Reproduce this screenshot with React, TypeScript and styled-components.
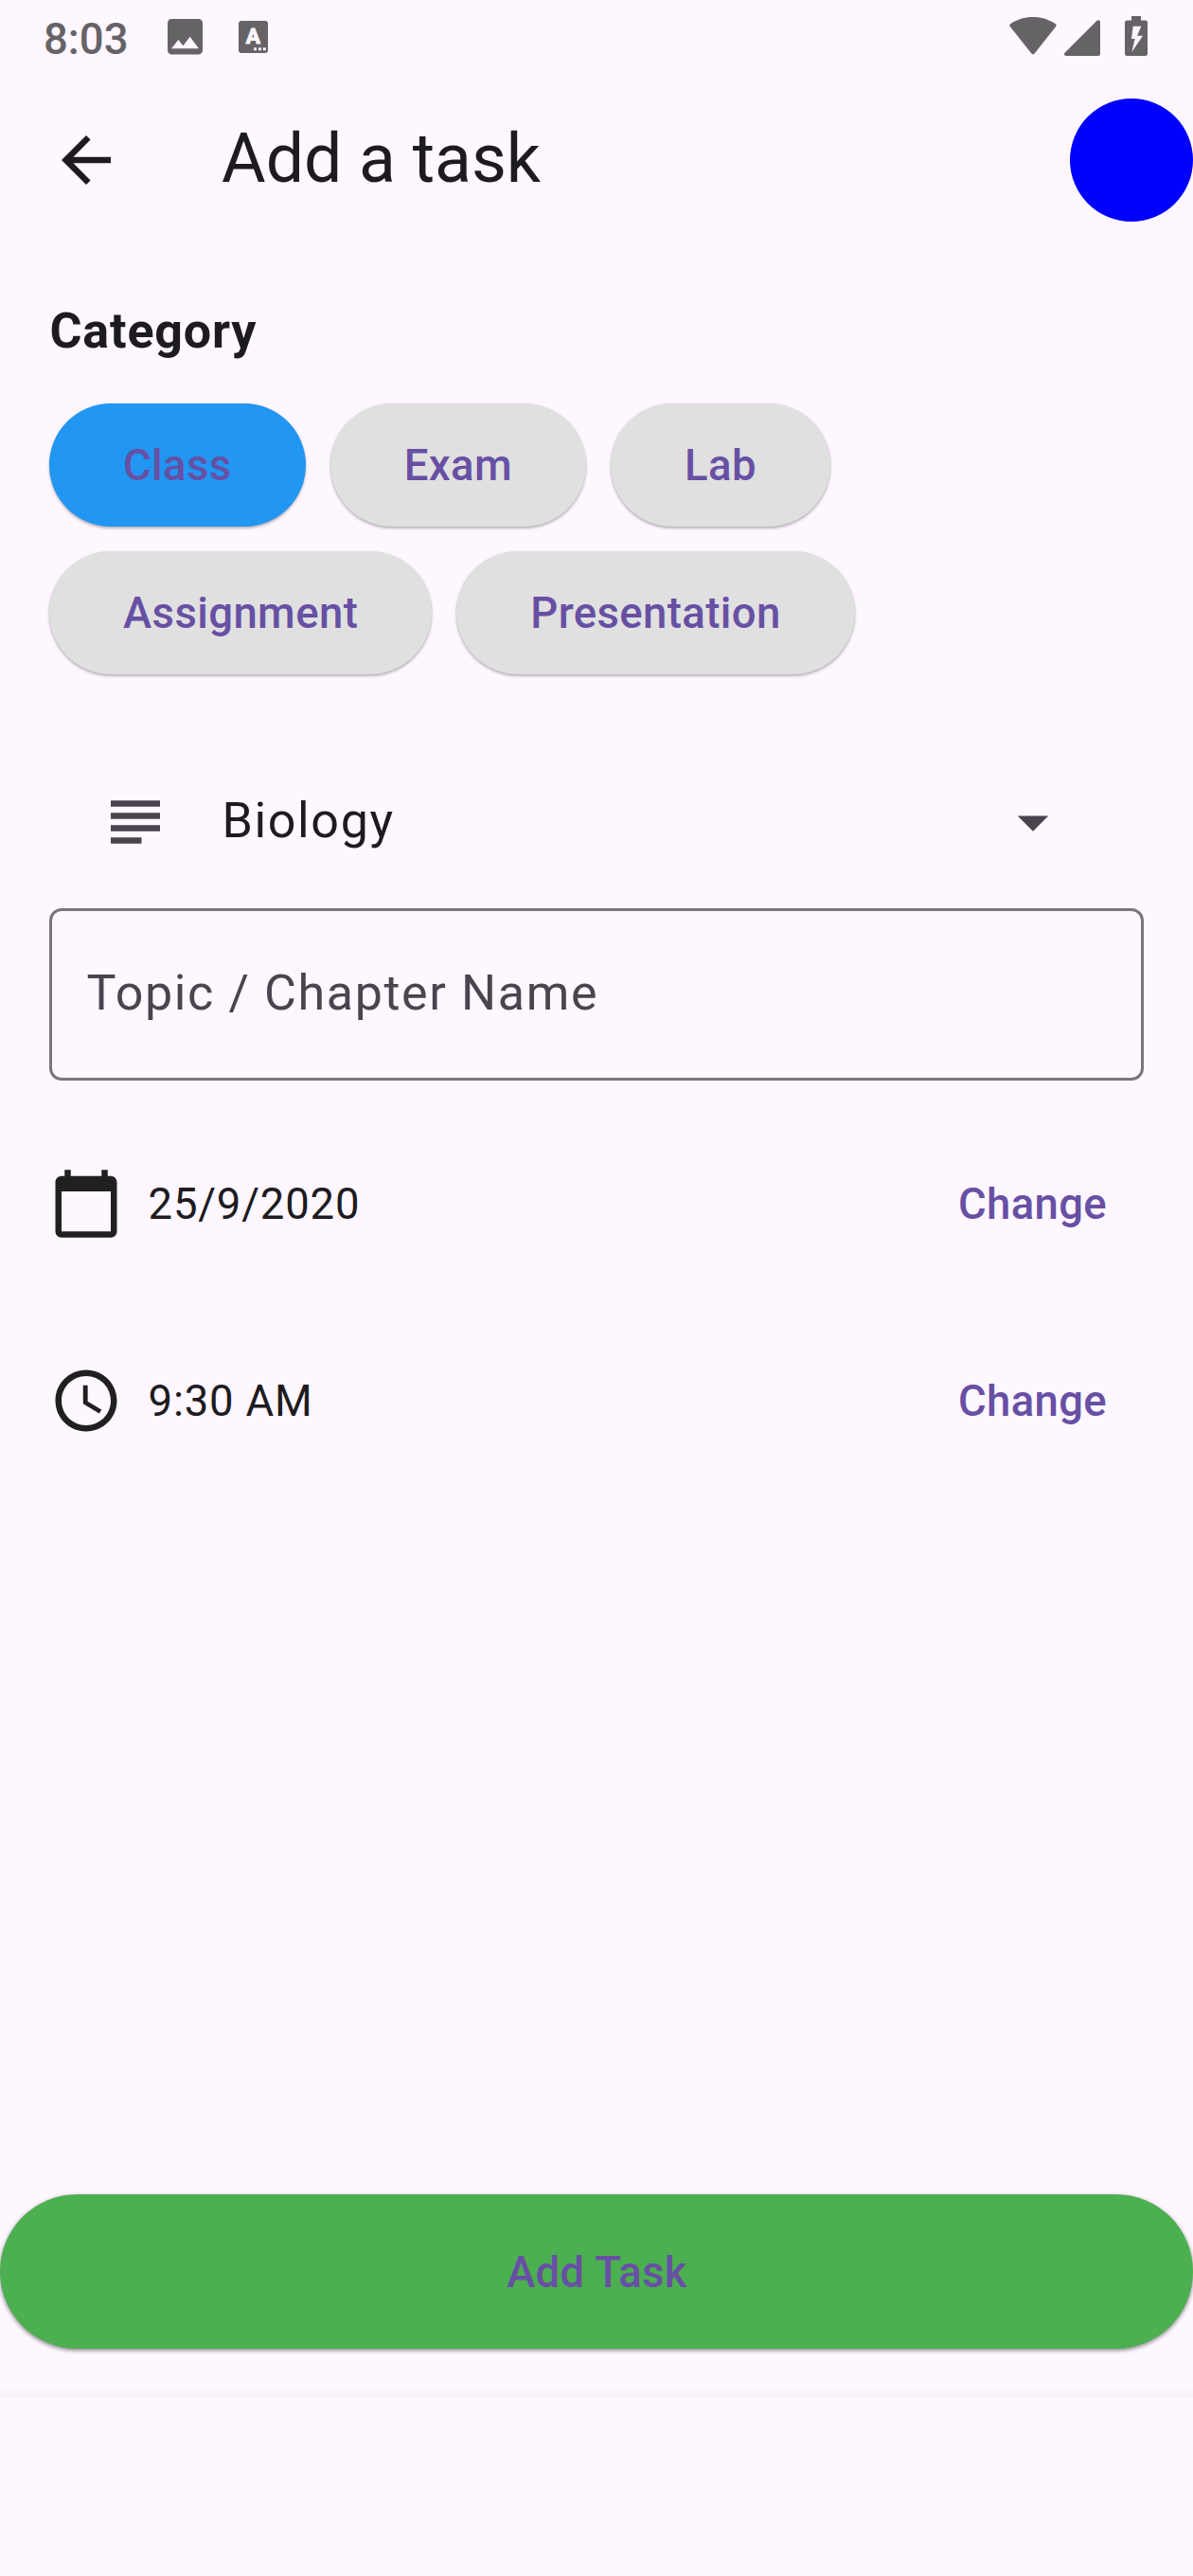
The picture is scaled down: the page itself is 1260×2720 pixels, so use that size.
import React, { useState } from "react";
import styled, { createGlobalStyle } from "styled-components";

const color = {
  surface: "#fef7ff",
  onSurface: "#1d1b20",
  onSurfaceVariant: "#49454f",
  outline: "#79747e",
  primary: "#6750a4",
  status: "#666367",
  selected: "#2196f3",
  chip: "#e0e0e0",
  accent: "#4caf50",
  avatar: "#0000ff",
  icon: "#212021",
};

const GlobalStyle = createGlobalStyle`
  *, *::before, *::after { box-sizing: border-box; }
  html, body { margin: 0; padding: 0; background: ${color.surface}; }
  button { font: inherit; border: 0; padding: 0; margin: 0; background: none; color: inherit; cursor: pointer; }
  svg { display: block; flex: none; }
`;

const Screen = styled.div`
  width: 1260px;
  height: 2720px;
  overflow: hidden;
  display: flex;
  flex-direction: column;
  background: ${color.surface};
  color: ${color.onSurface};
  font-family: Roboto, "Liberation Sans", sans-serif;
`;

const StatusBar = styled.header`
  height: 78px;
  padding: 0 48px 0 46px;
  display: flex;
  justify-content: space-between;
  align-items: flex-start;
  color: ${color.status};
`;

const StatusGroup = styled.div`
  display: flex;
  align-items: flex-start;
`;

const Clock = styled.span`
  width: 130.5px;
  padding-top: 15px;
  font-size: 45.5px;
  line-height: 53px;
  font-weight: 500;
`;

const StatusIcon = styled.span<{ $top: number; $gap?: number }>`
  margin-top: ${(p) => p.$top}px;
  margin-left: ${(p) => p.$gap ?? 0}px;
`;

const AppBar = styled.div`
  height: 182px;
  padding-left: 52px;
  display: flex;
  align-items: center;
`;

const BackButton = styled.button`
  width: 78px;
  height: 78px;
  margin-right: 104px;
`;

const Title = styled.h1`
  flex: 1;
  margin: 0;
  padding-bottom: 3px;
  font-size: 71.5px;
  line-height: 91px;
  font-weight: 400;
`;

const Avatar = styled.div`
  width: 130px;
  height: 130px;
  border-radius: 50%;
  background: ${color.avatar};
`;

const Body = styled.main`
  flex: 1;
  padding: 52px 52px 0;
  display: flex;
  flex-direction: column;
`;

const Heading = styled.h2`
  margin: 0 0 39px;
  padding: 1px 0 0 0.5px;
  height: 75px;
  font-size: 52px;
  line-height: 74px;
  font-weight: 700;
  letter-spacing: 0.8125px;
`;

const Chips = styled.div`
  display: flex;
  flex-wrap: wrap;
  gap: 26px;
  padding-right: 260px;
`;

const Chip = styled.button<{ $selected: boolean }>`
  height: 130px;
  padding: 1px 78px 0;
  border-radius: 65px;
  background: ${(p) => (p.$selected ? color.selected : color.chip)};
  color: ${color.primary};
  font-size: 45.5px;
  line-height: 65px;
  font-weight: 500;
  letter-spacing: 0.4px;
  box-shadow: 0 2px 3px rgba(0, 0, 0, 0.27), 0 0 2px rgba(0, 0, 0, 0.07);
`;

const SubjectRow = styled.div`
  height: 182px;
  margin-top: 65px;
  padding: 0 78px 0 52px;
  display: flex;
  align-items: center;
`;

const SubjectName = styled.span`
  flex: 1;
  padding: 0 0 2px 52.5px;
  font-size: 52px;
  line-height: 78px;
  letter-spacing: 1.625px;
`;

const TopicField = styled.label`
  height: 182px;
  padding: 0 36.5px 2px;
  display: flex;
  align-items: center;
  border: 3px solid ${color.outline};
  border-radius: 13px;
  color: ${color.onSurfaceVariant};
  font-size: 52px;
  line-height: 78px;
  letter-spacing: 1.625px;
`;

const Details = styled.div`
  margin-top: 52px;
  display: flex;
  flex-direction: column;
  gap: 52px;
`;

const DetailRow = styled.div`
  height: 156px;
  display: flex;
  align-items: center;
`;

const DetailValue = styled.span`
  flex: 1;
  padding: 1px 0 0 26.5px;
  font-size: 45.5px;
  line-height: 65px;
  letter-spacing: 0.8125px;
`;

const TextButton = styled.button`
  height: 130px;
  padding: 1px 39px 0;
  color: ${color.primary};
  font-size: 45.5px;
  line-height: 65px;
  font-weight: 500;
  letter-spacing: 0.325px;
`;

const BottomBar = styled.footer`
  height: 403px;
  display: flex;
  flex-direction: column;
`;

const AddButton = styled.button`
  height: 162.5px;
  padding: 2.5px 0 0 1px;
  border-radius: 82px;
  background: ${color.accent};
  color: ${color.primary};
  font-size: 45.5px;
  line-height: 65px;
  font-weight: 500;
  letter-spacing: 0.325px;
  box-shadow: 0 2px 4px rgba(0, 0, 0, 0.36), 0 1px 5px rgba(0, 0, 0, 0.14);
`;

const BarShade = styled.div`
  height: 9px;
  margin-top: 42.5px;
  background: linear-gradient(to bottom, rgba(246, 239, 247, 0), #f5eef6);
`;

const MaterialIcon = ({ path, fill, size = 78 }: { path: string; fill: string; size?: number }) => (
  <svg width={size} height={size} viewBox="0 0 24 24" fill={fill}>
    <path d={path} />
  </svg>
);

const paths = {
  back: "M20 11H7.83l5.59-5.59L12 4l-8 8 8 8 1.41-1.41L7.83 13H20v-2z",
  subject: "M14 17H4v2h10v-2zm6-8H4v2h16V9zM4 15h16v-2H4v2zM4 5v2h16V5H4z",
  dropdown: "M7 10l5 5 5-5z",
  calendar:
    "M20 3h-1V1h-2v2H7V1H5v2H4c-1.1 0-2 .9-2 2v16c0 1.1.9 2 2 2h16c1.1 0 2-.9 2-2V5c0-1.1-.9-2-2-2zm0 18H4V8h16v13z",
  time: "M11.99 2C6.47 2 2 6.48 2 12s4.47 10 9.99 10C17.52 22 22 17.52 22 12S17.52 2 11.99 2zM12 20c-4.42 0-8-3.58-8-8s3.58-8 8-8 8 3.58 8 8-3.58 8-8 8zm.5-13H11v6l5.25 3.15.75-1.23-4.5-2.67z",
};

const PictureIcon = () => (
  <svg width="37" height="37.5" viewBox="3 3 18 18" preserveAspectRatio="none" fill={color.status}>
    <path d="M21 19V5c0-1.1-.9-2-2-2H5c-1.1 0-2 .9-2 2v14c0 1.1.9 2 2 2h14c1.1 0 2-.9 2-2zM8.5 13.5l2.5 3.01L14.5 12l4.5 6H5l3.5-4.5z" />
  </svg>
);

const KeyboardIcon = () => (
  <svg width="31" height="34" viewBox="0 0 31 34">
    <rect width="31" height="34" rx="3" fill={color.status} />
    <text
      x="15.4"
      y="24.2"
      textAnchor="middle"
      fontFamily="Roboto, sans-serif"
      fontWeight="700"
      fontSize="22.5"
      fill={color.surface}
      stroke={color.surface}
      strokeWidth="1"
      strokeLinejoin="round"
    >
      A
    </text>
    <g fill={color.surface}>
      <rect x="16" y="28.3" width="3" height="3" rx="0.5" />
      <rect x="21" y="28.3" width="3" height="3" rx="0.5" />
      <rect x="25.8" y="28.3" width="3" height="3" rx="0.5" />
    </g>
  </svg>
);

const WifiIcon = () => (
  <svg width="50" height="40" viewBox="0 0 50 40" fill={color.status}>
    <path d="M1.2 7.2C8 2.6 16 0 25 0s17 2.6 23.8 7.2c1 .7 1.1 1.8.4 2.8L26.6 38.6c-.9 1.1-2.3 1.1-3.2 0L.8 10C.1 9 .2 7.9 1.2 7.2z" />
  </svg>
);

const SignalIcon = () => (
  <svg width="38" height="38" viewBox="0 0 38 38" fill={color.status}>
    <path d="M34.6.8C36 -.5 38 .2 38 2.2V36a2 2 0 0 1-2 2H2.2C0 38-.6 36 .8 34.6z" />
  </svg>
);

const BatteryIcon = () => (
  <svg width="24" height="42" viewBox="0 0 24 42">
    <path
      fill={color.status}
      d="M7 0h10v4.5h4.5A2.5 2.5 0 0 1 24 7v32.5a2.5 2.5 0 0 1-2.5 2.5h-19A2.5 2.5 0 0 1 0 39.5V7a2.5 2.5 0 0 1 2.5-2.5H7z"
    />
    <path fill={color.surface} d="M8.7 10.7h8.6l-4.3 10h6L7.3 38l3.4-14H7z" />
  </svg>
);

const categories = ["Class", "Exam", "Lab", "Assignment", "Presentation"];

export default function App() {
  const [category, setCategory] = useState("Class");

  return (
    <Screen>
      <GlobalStyle />
      <StatusBar>
        <StatusGroup>
          <Clock>8:03</Clock>
          <StatusIcon $top={20.3}>
            <PictureIcon />
          </StatusIcon>
          <StatusIcon $top={22} $gap={38.2}>
            <KeyboardIcon />
          </StatusIcon>
        </StatusGroup>
        <StatusGroup>
          <StatusIcon $top={18}>
            <WifiIcon />
          </StatusIcon>
          <StatusIcon $top={21} $gap={8.5}>
            <SignalIcon />
          </StatusIcon>
          <StatusIcon $top={17} $gap={26}>
            <BatteryIcon />
          </StatusIcon>
        </StatusGroup>
      </StatusBar>

      <AppBar>
        <BackButton aria-label="Back">
          <MaterialIcon path={paths.back} fill={color.onSurface} />
        </BackButton>
        <Title>Add a task</Title>
        <Avatar />
      </AppBar>

      <Body>
        <Heading>Category</Heading>
        <Chips>
          {categories.map((name) => (
            <Chip key={name} $selected={name === category} onClick={() => setCategory(name)}>
              {name}
            </Chip>
          ))}
        </Chips>
        <SubjectRow>
          <MaterialIcon path={paths.subject} fill={color.onSurfaceVariant} />
          <SubjectName>Biology</SubjectName>
          <MaterialIcon path={paths.dropdown} fill={color.onSurfaceVariant} />
        </SubjectRow>
        <TopicField>Topic / Chapter Name</TopicField>
        <Details>
          <DetailRow>
            <MaterialIcon path={paths.calendar} fill={color.icon} />
            <DetailValue>25/9/2020</DetailValue>
            <TextButton>Change</TextButton>
          </DetailRow>
          <DetailRow>
            <MaterialIcon path={paths.time} fill={color.icon} />
            <DetailValue>9:30 AM</DetailValue>
            <TextButton>Change</TextButton>
          </DetailRow>
        </Details>
      </Body>

      <BottomBar>
        <AddButton>Add Task</AddButton>
        <BarShade />
      </BottomBar>
    </Screen>
  );
}
